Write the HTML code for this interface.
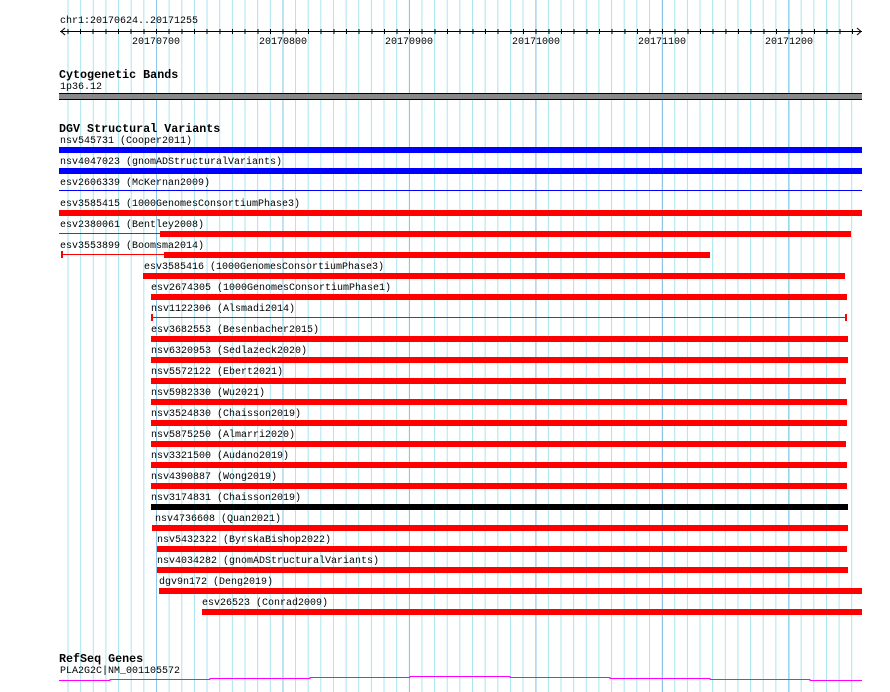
<!DOCTYPE html>
<html><head><style>
body{margin:0;background:#fff;width:890px;height:692px;overflow:hidden;position:relative;font-family:"Liberation Mono",monospace;font-size:10px;color:#000}
#grid{position:absolute;left:67px;top:0;width:795px;height:692px;
background-image:linear-gradient(to right,#8ec6ea 0 1px,transparent 1px),linear-gradient(to right,#a6e6ee 0 1px,transparent 1px);
background-size:126.5px 100%,12.65px 100%;background-position:89px 0,89px 0}
.t{position:absolute;white-space:pre;line-height:12px;margin-top:2px}
.h{font-weight:bold;font-size:11.7px;margin-top:1px}
.b{position:absolute;height:6px}
.r{background:#f00}.u{background:#00f}.k{background:#000}
.l{position:absolute;height:1px}
</style></head><body>
<div id="grid"></div>
<div class="t" style="left:60px;top:14px">chr1:20170624..20171255</div>
<svg style="position:absolute;left:0;top:0" width="890" height="60">
<line x1="60" y1="31.5" x2="862" y2="31.5" stroke="#000"/>
<polyline points="65,28 61,31.5 65,35" fill="none" stroke="#000"/>
<polyline points="857,28 861,31.5 857,35" fill="none" stroke="#000"/>
<g stroke="#000">
<line x1="68" y1="29" x2="68" y2="34"/><line x1="80.5" y1="29" x2="80.5" y2="34"/><line x1="93" y1="29" x2="93" y2="34"/><line x1="106" y1="29" x2="106" y2="34"/><line x1="118.5" y1="29" x2="118.5" y2="34"/><line x1="131" y1="29" x2="131" y2="34"/><line x1="144" y1="29" x2="144" y2="34"/><line x1="156.5" y1="29" x2="156.5" y2="34"/><line x1="169" y1="29" x2="169" y2="34"/><line x1="182" y1="29" x2="182" y2="34"/><line x1="194.5" y1="29" x2="194.5" y2="34"/><line x1="207" y1="29" x2="207" y2="34"/><line x1="220" y1="29" x2="220" y2="34"/><line x1="232.5" y1="29" x2="232.5" y2="34"/><line x1="245" y1="29" x2="245" y2="34"/><line x1="258" y1="29" x2="258" y2="34"/><line x1="270.5" y1="29" x2="270.5" y2="34"/><line x1="283" y1="29" x2="283" y2="34"/><line x1="296" y1="29" x2="296" y2="34"/><line x1="308.5" y1="29" x2="308.5" y2="34"/><line x1="321" y1="29" x2="321" y2="34"/><line x1="334" y1="29" x2="334" y2="34"/><line x1="346.5" y1="29" x2="346.5" y2="34"/><line x1="359" y1="29" x2="359" y2="34"/><line x1="372" y1="29" x2="372" y2="34"/><line x1="384.5" y1="29" x2="384.5" y2="34"/><line x1="397" y1="29" x2="397" y2="34"/><line x1="409.5" y1="29" x2="409.5" y2="34"/><line x1="422" y1="29" x2="422" y2="34"/><line x1="435" y1="29" x2="435" y2="34"/><line x1="447.5" y1="29" x2="447.5" y2="34"/><line x1="460" y1="29" x2="460" y2="34"/><line x1="473" y1="29" x2="473" y2="34"/><line x1="485.5" y1="29" x2="485.5" y2="34"/><line x1="498" y1="29" x2="498" y2="34"/><line x1="511" y1="29" x2="511" y2="34"/><line x1="523.5" y1="29" x2="523.5" y2="34"/><line x1="536" y1="29" x2="536" y2="34"/><line x1="549" y1="29" x2="549" y2="34"/><line x1="561.5" y1="29" x2="561.5" y2="34"/><line x1="574" y1="29" x2="574" y2="34"/><line x1="587" y1="29" x2="587" y2="34"/><line x1="599.5" y1="29" x2="599.5" y2="34"/><line x1="612" y1="29" x2="612" y2="34"/><line x1="625" y1="29" x2="625" y2="34"/><line x1="637.5" y1="29" x2="637.5" y2="34"/><line x1="650" y1="29" x2="650" y2="34"/><line x1="662.5" y1="29" x2="662.5" y2="34"/><line x1="675" y1="29" x2="675" y2="34"/><line x1="688" y1="29" x2="688" y2="34"/><line x1="700.5" y1="29" x2="700.5" y2="34"/><line x1="713" y1="29" x2="713" y2="34"/><line x1="726" y1="29" x2="726" y2="34"/><line x1="738.5" y1="29" x2="738.5" y2="34"/><line x1="751" y1="29" x2="751" y2="34"/><line x1="764" y1="29" x2="764" y2="34"/><line x1="776.5" y1="29" x2="776.5" y2="34"/><line x1="789" y1="29" x2="789" y2="34"/><line x1="802" y1="29" x2="802" y2="34"/><line x1="814.5" y1="29" x2="814.5" y2="34"/><line x1="827" y1="29" x2="827" y2="34"/><line x1="840" y1="29" x2="840" y2="34"/><line x1="852.5" y1="29" x2="852.5" y2="34"/>
</g></svg>
<div class="t" style="left:132px;top:35px">20170700</div>
<div class="t" style="left:259px;top:35px">20170800</div>
<div class="t" style="left:385px;top:35px">20170900</div>
<div class="t" style="left:512px;top:35px">20171000</div>
<div class="t" style="left:638px;top:35px">20171100</div>
<div class="t" style="left:765px;top:35px">20171200</div>

<div class="t h" style="left:59px;top:68px">Cytogenetic Bands</div>
<div class="t" style="left:60px;top:80px">1p36.12</div>
<div style="position:absolute;left:59px;top:93px;width:803px;height:5px;background:#888;border-top:1px solid #000;border-bottom:1px solid #000"></div>

<div class="t h" style="left:59px;top:122px">DGV Structural Variants</div>
<div class="t" style="left:60px;top:134px">nsv545731 (Cooper2011)</div><div class="b u" style="left:59px;top:147px;width:803px"></div>
<div class="t" style="left:60px;top:155px">nsv4047023 (gnomADStructuralVariants)</div><div class="b u" style="left:59px;top:168px;width:803px"></div>
<div class="t" style="left:60px;top:176px">esv2606339 (McKernan2009)</div><div class="l u" style="left:59px;top:190px;width:803px"></div>
<div class="t" style="left:60px;top:197px">esv3585415 (1000GenomesConsortiumPhase3)</div><div class="b r" style="left:59px;top:210px;width:803px"></div>
<div class="t" style="left:60px;top:218px">esv2380061 (Bentley2008)</div><div class="l r" style="left:59px;top:233px;width:101px"></div><div class="b r" style="left:160px;top:231px;width:691px"></div>
<div class="t" style="left:60px;top:239px">esv3553899 (Boomsma2014)</div><div class="l r" style="left:61px;top:254px;width:103px"></div><div class="r" style="position:absolute;left:61px;top:251px;width:2px;height:7px"></div><div class="b r" style="left:164px;top:252px;width:546px"></div>
<div class="t" style="left:144px;top:260px">esv3585416 (1000GenomesConsortiumPhase3)</div><div class="b r" style="left:143px;top:273px;width:702px"></div>
<div class="t" style="left:151px;top:281px">esv2674305 (1000GenomesConsortiumPhase1)</div><div class="b r" style="left:151px;top:294px;width:696px"></div>
<div class="t" style="left:151px;top:302px">nsv1122306 (Alsmadi2014)</div><div class="l r" style="left:151px;top:317px;width:696px"></div><div class="r" style="position:absolute;left:151px;top:314px;width:2px;height:7px"></div><div class="r" style="position:absolute;left:845px;top:314px;width:2px;height:7px"></div>
<div class="t" style="left:151px;top:323px">esv3682553 (Besenbacher2015)</div><div class="b r" style="left:151px;top:336px;width:697px"></div>
<div class="t" style="left:151px;top:344px">nsv6320953 (Sedlazeck2020)</div><div class="b r" style="left:151px;top:357px;width:697px"></div>
<div class="t" style="left:151px;top:365px">nsv5572122 (Ebert2021)</div><div class="b r" style="left:151px;top:378px;width:695px"></div>
<div class="t" style="left:151px;top:386px">nsv5982330 (Wu2021)</div><div class="b r" style="left:151px;top:399px;width:696px"></div>
<div class="t" style="left:151px;top:407px">nsv3524830 (Chaisson2019)</div><div class="b r" style="left:151px;top:420px;width:696px"></div>
<div class="t" style="left:151px;top:428px">nsv5875250 (Almarri2020)</div><div class="b r" style="left:151px;top:441px;width:695px"></div>
<div class="t" style="left:151px;top:449px">nsv3321500 (Audano2019)</div><div class="b r" style="left:151px;top:462px;width:696px"></div>
<div class="t" style="left:151px;top:470px">nsv4390887 (Wong2019)</div><div class="b r" style="left:151px;top:483px;width:696px"></div>
<div class="t" style="left:151px;top:491px">nsv3174831 (Chaisson2019)</div><div class="b k" style="left:151px;top:504px;width:697px"></div>
<div class="t" style="left:155px;top:512px">nsv4736608 (Quan2021)</div><div class="b r" style="left:152px;top:525px;width:696px"></div>
<div class="t" style="left:157px;top:533px">nsv5432322 (ByrskaBishop2022)</div><div class="b r" style="left:157px;top:546px;width:690px"></div>
<div class="t" style="left:157px;top:554px">nsv4034282 (gnomADStructuralVariants)</div><div class="b r" style="left:157px;top:567px;width:691px"></div>
<div class="t" style="left:159px;top:575px">dgv9n172 (Deng2019)</div><div class="b r" style="left:159px;top:588px;width:703px"></div>
<div class="t" style="left:202px;top:596px">esv26523 (Conrad2009)</div><div class="b r" style="left:202px;top:609px;width:660px"></div>

<div class="t h" style="left:59px;top:652px">RefSeq Genes</div>
<div class="t" style="left:60px;top:664px">PLA2G2C|NM_001105572</div>
<svg style="position:absolute;left:0;top:670px" width="890" height="20">
<polyline points="59,10.5 110,10.5 110,9.5 210,9.5 210,8.5 310,8.5 310,7.5 410,7.5 410,6.5 510,6.5 510,7.5 610,7.5 610,8.5 710,8.5 710,9.5 810,9.5 810,10.5 862,10.5" fill="none" stroke="#f0f" stroke-width="1"/>
</svg>
</body></html>
